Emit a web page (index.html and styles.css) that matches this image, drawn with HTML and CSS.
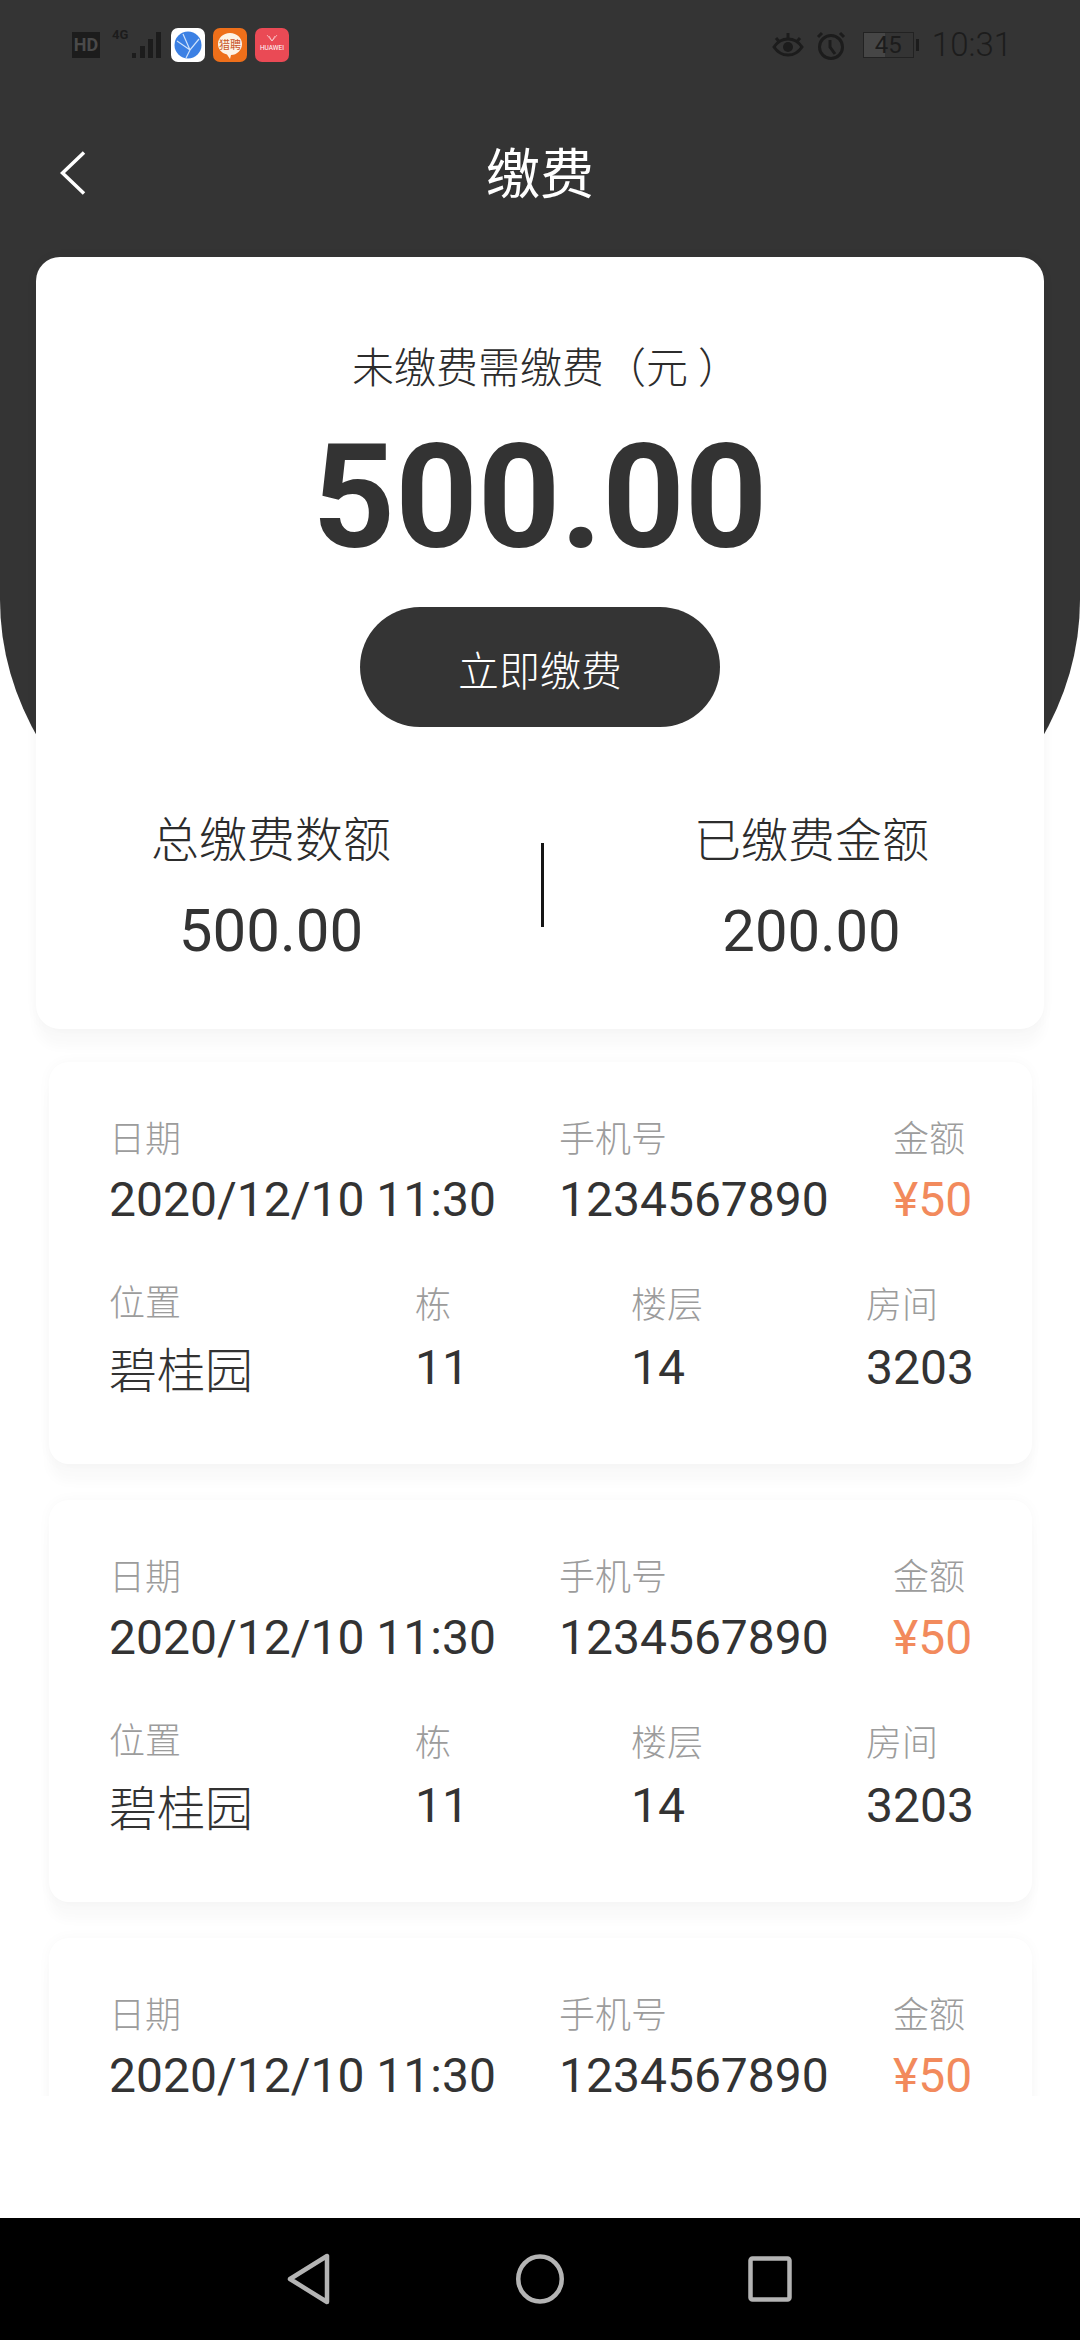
FILE: index.html
```html
<!DOCTYPE html>
<html lang="zh-CN">
  <head>
    <meta charset="UTF-8" />
    <meta name="viewport" content="width=device-width, initial-scale=1.0" />
    <title>缴费</title>
    <link rel="stylesheet" href="styles.css">
  </head>
  <body>
    <div class="screen">
      <div class="scroll">
        <header class="hero">
          <div class="statusbar">
            <div class="status-left">
              <span class="hd">HD</span>
              <span class="net">4G</span>
              <svg class="signal" width="30" height="26" viewBox="0 0 30 26">
                <rect x="0" y="21" width="4" height="5" />
                <rect x="8" y="14" width="5" height="12" />
                <rect x="16" y="7" width="5" height="19" />
                <rect x="24" y="0" width="5" height="26" />
              </svg>
              <svg class="app app-first" width="34" height="34" viewBox="0 0 34 34">
                <rect width="34" height="34" rx="7" fill="#fff" />
                <circle cx="17" cy="17" r="13.500" fill="#3b80e4" />
                <path d="M6 13l13 9 9-11M19 22l-4 8M12 6l7 16" stroke="#cfe2fb" stroke-width="1.2" fill="none" />
              </svg>
              <svg class="app" width="34" height="34" viewBox="0 0 34 34">
                <rect width="34" height="34" rx="7" fill="#ee6f1a" />
                <path d="M17 5c7 0 12 5 12 11s-5 11-11 11l-1 4-3-4.500C8 25 5 21 5 16 5 10 10 5 17 5z" fill="#fdf3e6" />
                <text x="17" y="21" text-anchor="middle" class="app-cn">猎聘</text>
              </svg>
              <svg class="app" width="34" height="34" viewBox="0 0 34 34">
                <rect width="34" height="34" rx="7" fill="#ea4a55" />
                <path d="M12 7l5 6 5-6M14 8l3 5 3-5" stroke="#f9c6ca" stroke-width="0.8" fill="none" />
                <text x="17" y="22" text-anchor="middle" class="app-en">HUAWEI</text>
              </svg>
            </div>
            <div class="status-right">
              <svg class="eye" width="32" height="26" viewBox="0 0 32 26">
                <path d="M2 15c4-6 9-8 14-8s10 2 14 8c-4 6-9 8-14 8S6 21 2 15z" fill="none" stroke="#1c1c1c" stroke-width="3" />
                <circle cx="16" cy="15" r="5" fill="#1c1c1c" />
                <path d="M4 6l3.500 4M16 1v5M28 6l-3.500 4" stroke="#1c1c1c" stroke-width="3" />
              </svg>
              <svg class="alarm" width="30" height="29" viewBox="0 0 30 29">
                <circle cx="15" cy="16" r="11.500" fill="none" stroke="#1c1c1c" stroke-width="3" />
                <path d="M14 9v7l5 7M2 6l4-4M28 6l-4-4" fill="none" stroke="#1c1c1c" stroke-width="3" />
              </svg>
              <div class="battery"><span class="battery-num">45</span></div>
              <span class="battery-nub"></span>
              <span class="clock">10:31</span>
            </div>
          </div>
          <nav class="topnav">
            <svg class="back" width="26" height="44" viewBox="0 0 26 44">
              <path d="M24 1.500L2.500 22 24 42.500" fill="none" stroke="#fff" stroke-width="3.500" />
            </svg>
            <h1 class="title">缴费</h1>
          </nav>
        </header>

        <section class="summary">
          <p class="summary-label">未缴费需缴费（元 ）</p>
          <p class="summary-num">500.00</p>
          <div class="pay-btn">立即缴费</div>
          <div class="stats">
            <div class="stat">
              <p class="stat-label">总缴费数额</p>
              <p class="stat-num">500.00</p>
            </div>
            <span class="stat-line"></span>
            <div class="stat stat-paid">
              <p class="stat-label">已缴费金额</p>
              <p class="stat-num">200.00</p>
            </div>
          </div>
        </section>

        <section class="records">
          <article class="record">
            <div class="row row-top">
              <div><p class="lbl">日期</p><p class="val">2020/12/10 11:30</p></div>
              <div><p class="lbl">手机号</p><p class="val">1234567890</p></div>
              <div><p class="lbl">金额</p><p class="val money">¥50</p></div>
            </div>
            <div class="row row-bottom">
              <div><p class="lbl lbl-up">位置</p><p class="val val-cn">碧桂园</p></div>
              <div><p class="lbl">栋</p><p class="val">11</p></div>
              <div><p class="lbl">楼层</p><p class="val">14</p></div>
              <div><p class="lbl">房间</p><p class="val">3203</p></div>
            </div>
          </article>
          <article class="record">
            <div class="row row-top">
              <div><p class="lbl">日期</p><p class="val">2020/12/10 11:30</p></div>
              <div><p class="lbl">手机号</p><p class="val">1234567890</p></div>
              <div><p class="lbl">金额</p><p class="val money">¥50</p></div>
            </div>
            <div class="row row-bottom">
              <div><p class="lbl lbl-up">位置</p><p class="val val-cn">碧桂园</p></div>
              <div><p class="lbl">栋</p><p class="val">11</p></div>
              <div><p class="lbl">楼层</p><p class="val">14</p></div>
              <div><p class="lbl">房间</p><p class="val">3203</p></div>
            </div>
          </article>
          <article class="record">
            <div class="row row-top">
              <div><p class="lbl">日期</p><p class="val">2020/12/10 11:30</p></div>
              <div><p class="lbl">手机号</p><p class="val">1234567890</p></div>
              <div><p class="lbl">金额</p><p class="val money">¥50</p></div>
            </div>
          </article>
        </section>
      </div>

      <div class="blank"></div>

      <footer class="sysnav">
        <svg width="46" height="52" viewBox="0 0 46 52">
          <path d="M41 3v46L4 26z" fill="none" stroke="#b4b4b4" stroke-width="4.500" stroke-linejoin="round" />
        </svg>
        <svg width="48" height="50" viewBox="0 0 48 50">
          <ellipse cx="24" cy="25" rx="21.750" ry="22.500" fill="none" stroke="#b4b4b4" stroke-width="4.500" />
        </svg>
        <svg width="44" height="46" viewBox="0 0 44 46">
          <rect x="2.500" y="2.500" width="39" height="41" rx="2" fill="none" stroke="#b4b4b4" stroke-width="4.500" />
        </svg>
      </footer>
    </div>
  </body>
</html>
```

FILE: styles.css
```css
* {
  margin: 0px;
  padding: 0px;
  box-sizing: border-box;
}

body {
  width: 1080px;
  height: 2340px;
  overflow: hidden;
  background-color: white;
  color: #333;
  font-family: Roboto, "Noto Sans CJK SC", sans-serif;
}

.screen {
  display: flex;
  flex-direction: column;
  height: 2340px;
}

.scroll {
  flex: none;
  height: 2096px;
}

/* Mørk top med buet bund */
.hero {
  height: 975px;
  margin-bottom: -718px;
  background-color: #343434;
  border-radius: 0 0 540px 540px / 0 0 375px 375px;
}

.statusbar {
  display: flex;
  justify-content: space-between;
  align-items: center;
  height: 90px;
  padding: 0 72px;
  color: #1c1c1c;
}

.status-left,
.status-right {
  display: flex;
  align-items: center;
}

.hd {
  display: block;
  width: 28px;
  height: 26px;
  background-color: #1c1c1c;
  color: #4a4a4a;
  font-size: 18px;
  font-weight: 700;
  line-height: 26px;
  text-align: center;
}

.net {
  align-self: flex-start;
  width: 18px;
  margin-left: 12px;
  font-size: 13px;
  font-weight: 700;
  line-height: 14px;
}

.signal {
  margin-left: 2px;
  fill: #1c1c1c;
}

.app {
  margin-left: 8px;
}

.app-first {
  margin-left: 9px;
}

.app-cn {
  font-size: 11px;
  fill: #c8552a;
}

.app-en {
  font-size: 6.500px;
  fill: #fff;
}

.status-right {
  margin-right: -4px;
}

.alarm {
  margin-left: 12px;
}

.battery {
  width: 51px;
  height: 26px;
  margin-left: 17px;
  border: 1px solid #222;
  background: linear-gradient(to right, #464646 42%, transparent 42%);
}

.battery-num {
  display: block;
  font-size: 24px;
  line-height: 24px;
  text-align: center;
}

.battery-nub {
  display: block;
  width: 3px;
  height: 12px;
  margin-left: 2px;
  background-color: #1c1c1c;
}

.clock {
  margin-left: 13px;
  font-size: 33px;
  font-weight: 300;
  line-height: 36px;
}

.topnav {
  position: relative;
  display: flex;
  justify-content: center;
  align-items: center;
  height: 166px;
}

.back {
  position: absolute;
  left: 60px;
  top: 61px;
}

.title {
  margin-top: 6px;
  color: white;
  font-size: 54px;
  font-weight: 400;
  line-height: 60px;
}

/* Det store kort */
.summary {
  position: relative;
  display: flex;
  flex-direction: column;
  align-items: center;
  height: 772px;
  margin: 0 36px;
  padding-top: 87px;
  background-color: white;
  border-radius: 24px;
  box-shadow: 0 0 14px rgba(0, 0, 0, 0.03), 0 18px 12px rgba(0, 0, 0, 0.025);
}

.summary-label {
  margin-left: 12px;
  color: #2c2c2c;
  font-size: 42px;
  font-weight: 300;
  line-height: 50px;
  white-space: pre;
}

.summary-num {
  margin-top: 29px;
  font-size: 144px;
  font-weight: 700;
  line-height: 150px;
}

.pay-btn {
  display: flex;
  justify-content: center;
  align-items: center;
  width: 360px;
  height: 120px;
  margin-top: 34px;
  padding-top: 2px;
  border-radius: 60px;
  background-color: #343434;
  color: white;
  font-size: 41px;
  font-weight: 300;
}

.stats {
  display: grid;
  grid-template-columns: 470px 3px 1fr;
  column-gap: 35px;
  width: 100%;
  margin-top: 84px;
}

.stat {
  text-align: center;
}

.stat-label {
  color: #2c2c2c;
  font-size: 48px;
  font-weight: 300;
  line-height: 60px;
}

.stat-num {
  margin-top: 25px;
  font-size: 60px;
  line-height: 70px;
}

.stat-paid .stat-label {
  font-size: 47px;
}

.stat-paid .stat-num {
  font-size: 58px;
}

.stat-line {
  height: 84px;
  margin-top: 32px;
  background-color: #151515;
}

/* Listen */
.records {
  position: relative;
  display: flex;
  flex-direction: column;
  gap: 36px;
  margin: 33px 48px 0 49px;
}

.record {
  height: 402px;
  padding: 55px 0 0 60px;
  background-color: white;
  border-radius: 20px;
  box-shadow: 0 0 14px rgba(0, 0, 0, 0.03), 0 18px 12px rgba(0, 0, 0, 0.025);
}

.row {
  display: grid;
}

.row-top {
  grid-template-columns: 450px 334px 1fr;
}

.row-bottom {
  grid-template-columns: 306px 216px 235px 1fr;
  margin-top: 55px;
}

.lbl {
  color: #9c9c9c;
  font-size: 36px;
  font-weight: 300;
  line-height: 46px;
}

.lbl-up {
  margin-top: -2px;
  margin-bottom: 2px;
}

.val {
  margin-top: 9px;
  font-size: 48px;
  line-height: 56px;
  white-space: nowrap;
}

.row-bottom .val {
  margin-top: 11px;
}

.row-bottom .val-cn {
  margin-top: 17px;
  font-weight: 300;
}

.money {
  color: #f28a5c;
}

/* Hvid bund over listen */
.blank {
  position: relative;
  flex: 1;
  background-color: white;
}

.sysnav {
  position: relative;
  display: flex;
  align-items: center;
  height: 122px;
  padding-left: 286px;
  gap: 184px;
  background-color: black;
}
```
